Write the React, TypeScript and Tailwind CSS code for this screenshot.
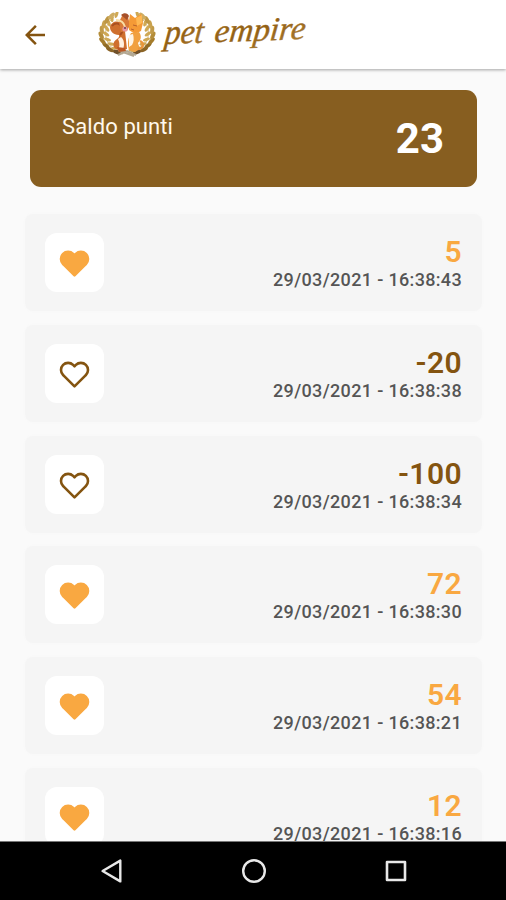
import { FC } from 'react';
import cx from 'clsx';

type Movement = {
  points: number;
  date: string;
};

const movements: Movement[] = [
  { points: 5, date: '29/03/2021 - 16:38:43' },
  { points: -20, date: '29/03/2021 - 16:38:38' },
  { points: -100, date: '29/03/2021 - 16:38:34' },
  { points: 72, date: '29/03/2021 - 16:38:30' },
  { points: 54, date: '29/03/2021 - 16:38:21' },
  { points: 12, date: '29/03/2021 - 16:38:16' },
];

// one branch of the laurel, from the bottom of the wreath to its tip
const leaves = [
  { x: 19, y: 40, r: 18, fill: '#70502a' },
  { x: 12, y: 37.5, r: 28, fill: '#8b6426' },
  { x: 8, y: 33.5, r: 38, fill: '#8f6a25' },
  { x: 4.5, y: 29, r: 48, fill: '#a57c2b' },
  { x: 3.2, y: 23.5, r: 64, fill: '#b48d3a' },
  { x: 3.8, y: 18, r: 82, fill: '#c19a48' },
  { x: 5.8, y: 12.5, r: 100, fill: '#c9a24e' },
  { x: 9, y: 8, r: 116, fill: '#bd9644' },
  { x: 13.5, y: 4, r: 136, fill: '#cfad62' },
];

const Branch: FC = () => (
  <>
    <path d="M25 42C12 38 6 28 8 17c1-5 4-9 8-12" fill="none" stroke="#dcc48b" strokeWidth="1" />
    {leaves.map(({ x, y, r, fill }) => (
      <g key={y}>
        <ellipse cx={x} cy={y} rx="4.3" ry="2" fill={fill} transform={`rotate(${r} ${x} ${y})`} />
        <ellipse
          cx={x + 5}
          cy={y - 1.5}
          rx="3.6"
          ry="1.6"
          fill="#cfa955"
          transform={`rotate(${r - 28} ${x + 5} ${y - 1.5})`}
        />
      </g>
    ))}
  </>
);

const Emblem: FC = () => (
  <svg className="h-[46px] w-[58px] shrink-0" viewBox="0 0 58 46">
    <Branch />
    <g transform="translate(58 0) scale(-1 1)">
      <Branch />
    </g>
    <path d="M20 43l9-4 9 4M22 39l14 5" fill="none" stroke="#b3a893" strokeWidth="2" />
    {/* squirrel */}
    <path d="M24 38c-7 1-10-4-8-8 2-3 6-4 5-7-6 0-9-4-9-8 1-5 7-7 11-4 3 2 4 5 4 8l2 18z" fill="#cf6f2d" />
    <path d="M14 14c3-4 8-3 10 1 1 3 0 6-2 8" fill="none" stroke="#a94f20" strokeWidth="2" />
    <path d="M21 10l4-8 5 3 2 8-3 6-6 1z" fill="#d97a38" />
    <path d="M23 3c3-3 7-2 8 1l-2 4z" fill="#a7502a" />
    <path d="M18 8c5 0 8 3 9 7" fill="none" stroke="#f9dfa6" strokeWidth="2" />
    <path d="M23 25c3 2 4 8 2 12l-4-1c1-4 0-7-1-9z" fill="#fff0df" />
    <path d="M19 35l8 1 1 3-7 1z" fill="#bb5824" />
    {/* cat */}
    <path d="M31 9l1-7 5 4 6-4 2 9-2 8-6 3-6-4z" fill="#f59a36" />
    <path d="M33 21l8-1c3 4 2 8-1 11l2 6-5 3-6-2c-2-6-1-12 2-17z" fill="#f1a040" />
    <path d="M38 6l6-3v8l-5 3z" fill="#ffb852" />
    <path d="M31 23l4-1c1 4 1 8-1 11l-3 2z" fill="#fff4e6" />
    <path d="M40 37c6-1 6-6 2-8" fill="none" stroke="#e9943b" strokeWidth="2.5" />
    <circle cx="27" cy="17" r="2.6" fill="#e99aa0" />
    <circle cx="27" cy="16" r="1.1" fill="#744352" />
    <path d="M35 13l4 1M33 17l3 1" stroke="#b9612b" strokeWidth="1" />
  </svg>
);

const Wordmark: FC = () => (
  <svg className="ml-1 h-14 w-[152px] shrink-0" viewBox="0 0 152 56">
    <defs>
      <linearGradient id="gold" x1="0" y1="0" x2="1" y2="1">
        <stop offset="0" stopColor="#9a6a1c" />
        <stop offset=".5" stopColor="#936014" />
        <stop offset="1" stopColor="#b08238" />
      </linearGradient>
    </defs>
    <g fill="url(#gold)" stroke="url(#gold)" strokeWidth=".4" transform="rotate(-2 4 38) skewX(-8)">
      <text
        x="9"
        y="37"
        textLength="39"
        lengthAdjust="spacingAndGlyphs"
        className="font-['Liberation_Serif',serif] text-[35px] italic"
      >
        pet
      </text>
      <text
        x="59"
        y="37"
        textLength="91"
        lengthAdjust="spacingAndGlyphs"
        className="font-['Liberation_Serif',serif] text-[33px] italic"
      >
        empire
      </text>
    </g>
  </svg>
);

const Header: FC = () => (
  <header className="relative z-10 flex h-[69px] shrink-0 items-center bg-white shadow-[0_1px_3px_rgba(0,0,0,0.35)]">
    <svg className="ml-5 h-[30px] w-[30px]" viewBox="0 0 24 24" fill="#845410">
      <path d="M20 11H7.83l5.59-5.59L12 4l-8 8 8 8 1.41-1.41L7.83 13H20v-2z" />
    </svg>
    <div className="ml-12 flex items-center">
      <Emblem />
      <Wordmark />
    </div>
  </header>
);

const Heart: FC<{ filled: boolean }> = ({ filled }) => (
  <svg
    className={cx('mt-0.5 h-[31px] w-[31px]', filled ? 'fill-[#f9a841] stroke-[#f9a841]' : 'fill-none stroke-[#845410]')}
    viewBox="0 0 24 24"
    strokeWidth="2"
    strokeLinecap="round"
    strokeLinejoin="round"
  >
    <path d="M20.84 4.61a5.5 5.5 0 0 0-7.78 0L12 5.67l-1.06-1.06a5.5 5.5 0 0 0-7.78 7.78l1.06 1.06L12 21.23l7.78-7.78 1.06-1.06a5.5 5.5 0 0 0 0-7.78z" />
  </svg>
);

const MovementRow: FC<{ movement: Movement }> = ({ movement }) => {
  const earned = movement.points > 0;

  return (
    <li className="flex h-[97px] shrink-0 items-center justify-between rounded-lg bg-[#f5f5f5] px-5 shadow-[0_0_3px_#f7f7f7]">
      <div className="flex h-[59px] w-[59px] items-center justify-center rounded-xl bg-white">
        <Heart filled={earned} />
      </div>
      <div className="flex flex-col items-end pt-[3px]">
        <span
          className={cx(
            'text-[30px] leading-[32px] font-semibold tracking-[0.4px]',
            earned ? 'text-[#f9a841]' : 'text-[#845410]'
          )}
        >
          {movement.points}
        </span>
        <span className="text-[18px] leading-6 font-medium tracking-[0.34px] text-[#555]">{movement.date}</span>
      </div>
    </li>
  );
};

const NavigationBar: FC = () => (
  <nav className="flex h-[59px] shrink-0 items-center justify-between border-t border-[#777] bg-black pr-24 pl-[98px]">
    <svg className="h-7 w-7" viewBox="0 0 28 28" fill="none" stroke="#e8e8e8" strokeWidth="2.4" strokeLinejoin="round">
      <path d="M22.3 3.6v20.8L4.6 14z" />
    </svg>
    <svg className="h-7 w-7" viewBox="0 0 28 28" fill="none" stroke="#e8e8e8" strokeWidth="2.4">
      <circle cx="14" cy="14" r="10.8" />
    </svg>
    <svg className="h-7 w-7" viewBox="0 0 28 28" fill="none" stroke="#e8e8e8" strokeWidth="2.6" strokeLinejoin="round">
      <path d="M5 5h18v18H5z" />
    </svg>
  </nav>
);

export default function App() {
  return (
    <div className="flex h-[900px] w-[506px] flex-col overflow-hidden bg-[#fafafa] font-[Roboto,sans-serif]">
      <Header />
      <main className="flex min-h-0 flex-1 flex-col overflow-hidden pt-[21px]">
        <section className="mr-[29px] ml-[30px] flex h-[97px] shrink-0 items-center justify-between rounded-[11px] bg-[#875e20] pr-[33px] pl-8 text-white">
          <h1 className="mb-6 text-[22px] leading-7 tracking-[0.1px] text-[#fff8ec]">Saldo punti</h1>
          <span className="text-[42px] leading-none font-bold">23</span>
        </section>
        <ul className="mt-[27px] mr-6 ml-[25px] flex flex-col gap-[13.8px]">
          {movements.map((movement) => (
            <MovementRow key={movement.date} movement={movement} />
          ))}
        </ul>
      </main>
      <NavigationBar />
    </div>
  );
}
